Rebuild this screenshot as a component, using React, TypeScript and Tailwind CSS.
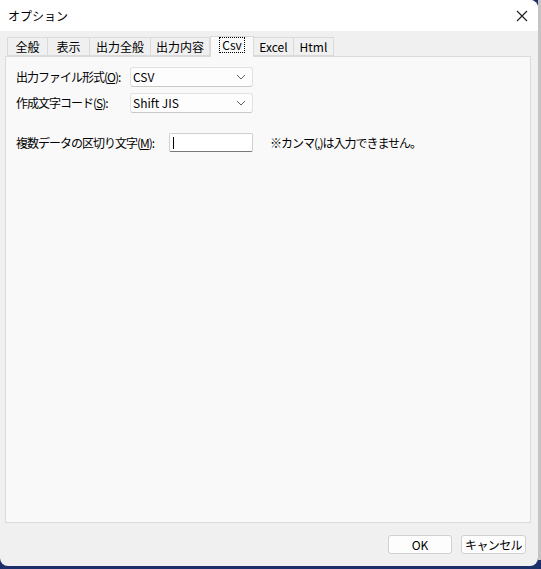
import React from 'react';

const font = { fontFamily: '"Noto Sans CJK JP", "Liberation Sans", sans-serif' };

function Chevron() {
  return (
    <svg width="10" height="6" viewBox="0 0 10 6" className="text-[#606060]">
      <path d="M1 1 L5 5 L9 1" fill="none" stroke="currentColor" strokeWidth="1" />
    </svg>
  );
}

function Select({ value }: { value: string }) {
  return (
    <div className="w-[123px] h-[20px] bg-[#fdfdfd] border border-[#e2e2e2] border-b-[#c8c8c8] rounded-[3px] flex items-center justify-between pl-[2px] pr-[6px]">
      <span className="text-[12px] leading-none">{value}</span>
      <Chevron />
    </div>
  );
}

const tabs = [
  { label: '全般', w: 41 },
  { label: '表示', w: 42 },
  { label: '出力全般', w: 61 },
  { label: '出力内容', w: 59 },
  { label: 'Csv', w: 44, active: true },
  { label: 'Excel', w: 40 },
  { label: 'Html', w: 40 },
];

export default function App() {
  return (
    <div className="w-[541px] h-[569px] bg-[#1b2f6b] overflow-hidden flex" style={font}>
      <div className="w-[538px] h-[566px] bg-[#f0f0f0] rounded-tr-[8px] rounded-b-[8px] flex flex-col text-black shrink-0">
        {/* Title bar */}
        <div className="h-[31px] bg-white rounded-tr-[8px] flex items-center justify-between pl-[8px] pr-[10px] shrink-0">
          <span className="text-[12px]">オプション</span>
          <svg width="12" height="12" viewBox="0 0 12 12">
            <path d="M1 1 L11 11 M11 1 L1 11" stroke="#222" strokeWidth="1.2" />
          </svg>
        </div>

        {/* Tabs */}
        <div className="pl-[7px] pt-[4px] flex items-end h-[25px] shrink-0 relative z-10">
          {tabs.map((t) =>
            t.active ? (
              <div
                key={t.label}
                className="h-[21px] bg-[#f9f9f9] border border-[#dadada] border-b-0 flex items-start justify-center pt-[1px] mb-[-1px]"
                style={{ width: t.w }}
              >
                <span className="text-[12px] leading-[14px] px-[2px] outline outline-1 outline-dotted outline-black">
                  {t.label}
                </span>
              </div>
            ) : (
              <div
                key={t.label}
                className="h-[19px] bg-[#f0f0f0] border border-[#dadada] border-l-0 first:border-l flex items-center justify-center text-[12px]"
                style={{ width: t.w }}
              >
                {t.label}
              </div>
            ),
          )}
        </div>

        {/* Page */}
        <div className="ml-[5px] w-[526px] h-[467px] bg-[#f9f9f9] border border-[#dadada] pt-[10px] pl-[10px] text-[12px] shrink-0">
          <div className="flex items-center h-[20px]">
            <span className="w-[114px] tracking-[-1px]">
              出力ファイル形式(<span className="underline">O</span>):
            </span>
            <Select value="CSV" />
          </div>
          <div className="flex items-center h-[20px] mt-[6px]">
            <span className="w-[114px] tracking-[-1px]">
              作成文字コード(<span className="underline">S</span>):
            </span>
            <Select value="Shift JIS" />
          </div>
          <div className="flex items-center h-[19px] mt-[20px]">
            <span className="w-[153px] tracking-[-1px]">
              複数データの区切り文字(<span className="underline">M</span>):
            </span>
            <div className="w-[84px] h-[19px] bg-white border border-[#d0d0d0] border-b-[#7a7a7a] rounded-[2px] flex items-center pl-[3px]">
              <div className="w-px h-[12px] bg-black" />
            </div>
            <span className="ml-[17px] tracking-[-1px]">※カンマ(,)は入力できません。</span>
          </div>
        </div>

        {/* Buttons */}
        <div className="flex justify-end gap-[9px] pr-[12px] pt-[12px]">
          <button className="w-[64px] h-[19px] bg-[#fdfdfd] border border-[#d0d0d0] rounded-[3px] text-[12px] leading-none">
            OK
          </button>
          <button className="w-[65px] h-[19px] bg-[#fdfdfd] border border-[#d0d0d0] rounded-[3px] text-[12px] leading-none tracking-[-0.6px]">
            キャンセル
          </button>
        </div>
      </div>
      <div className="w-[3px] h-[560px] bg-[#c4c4c4]" />
    </div>
  );
}
